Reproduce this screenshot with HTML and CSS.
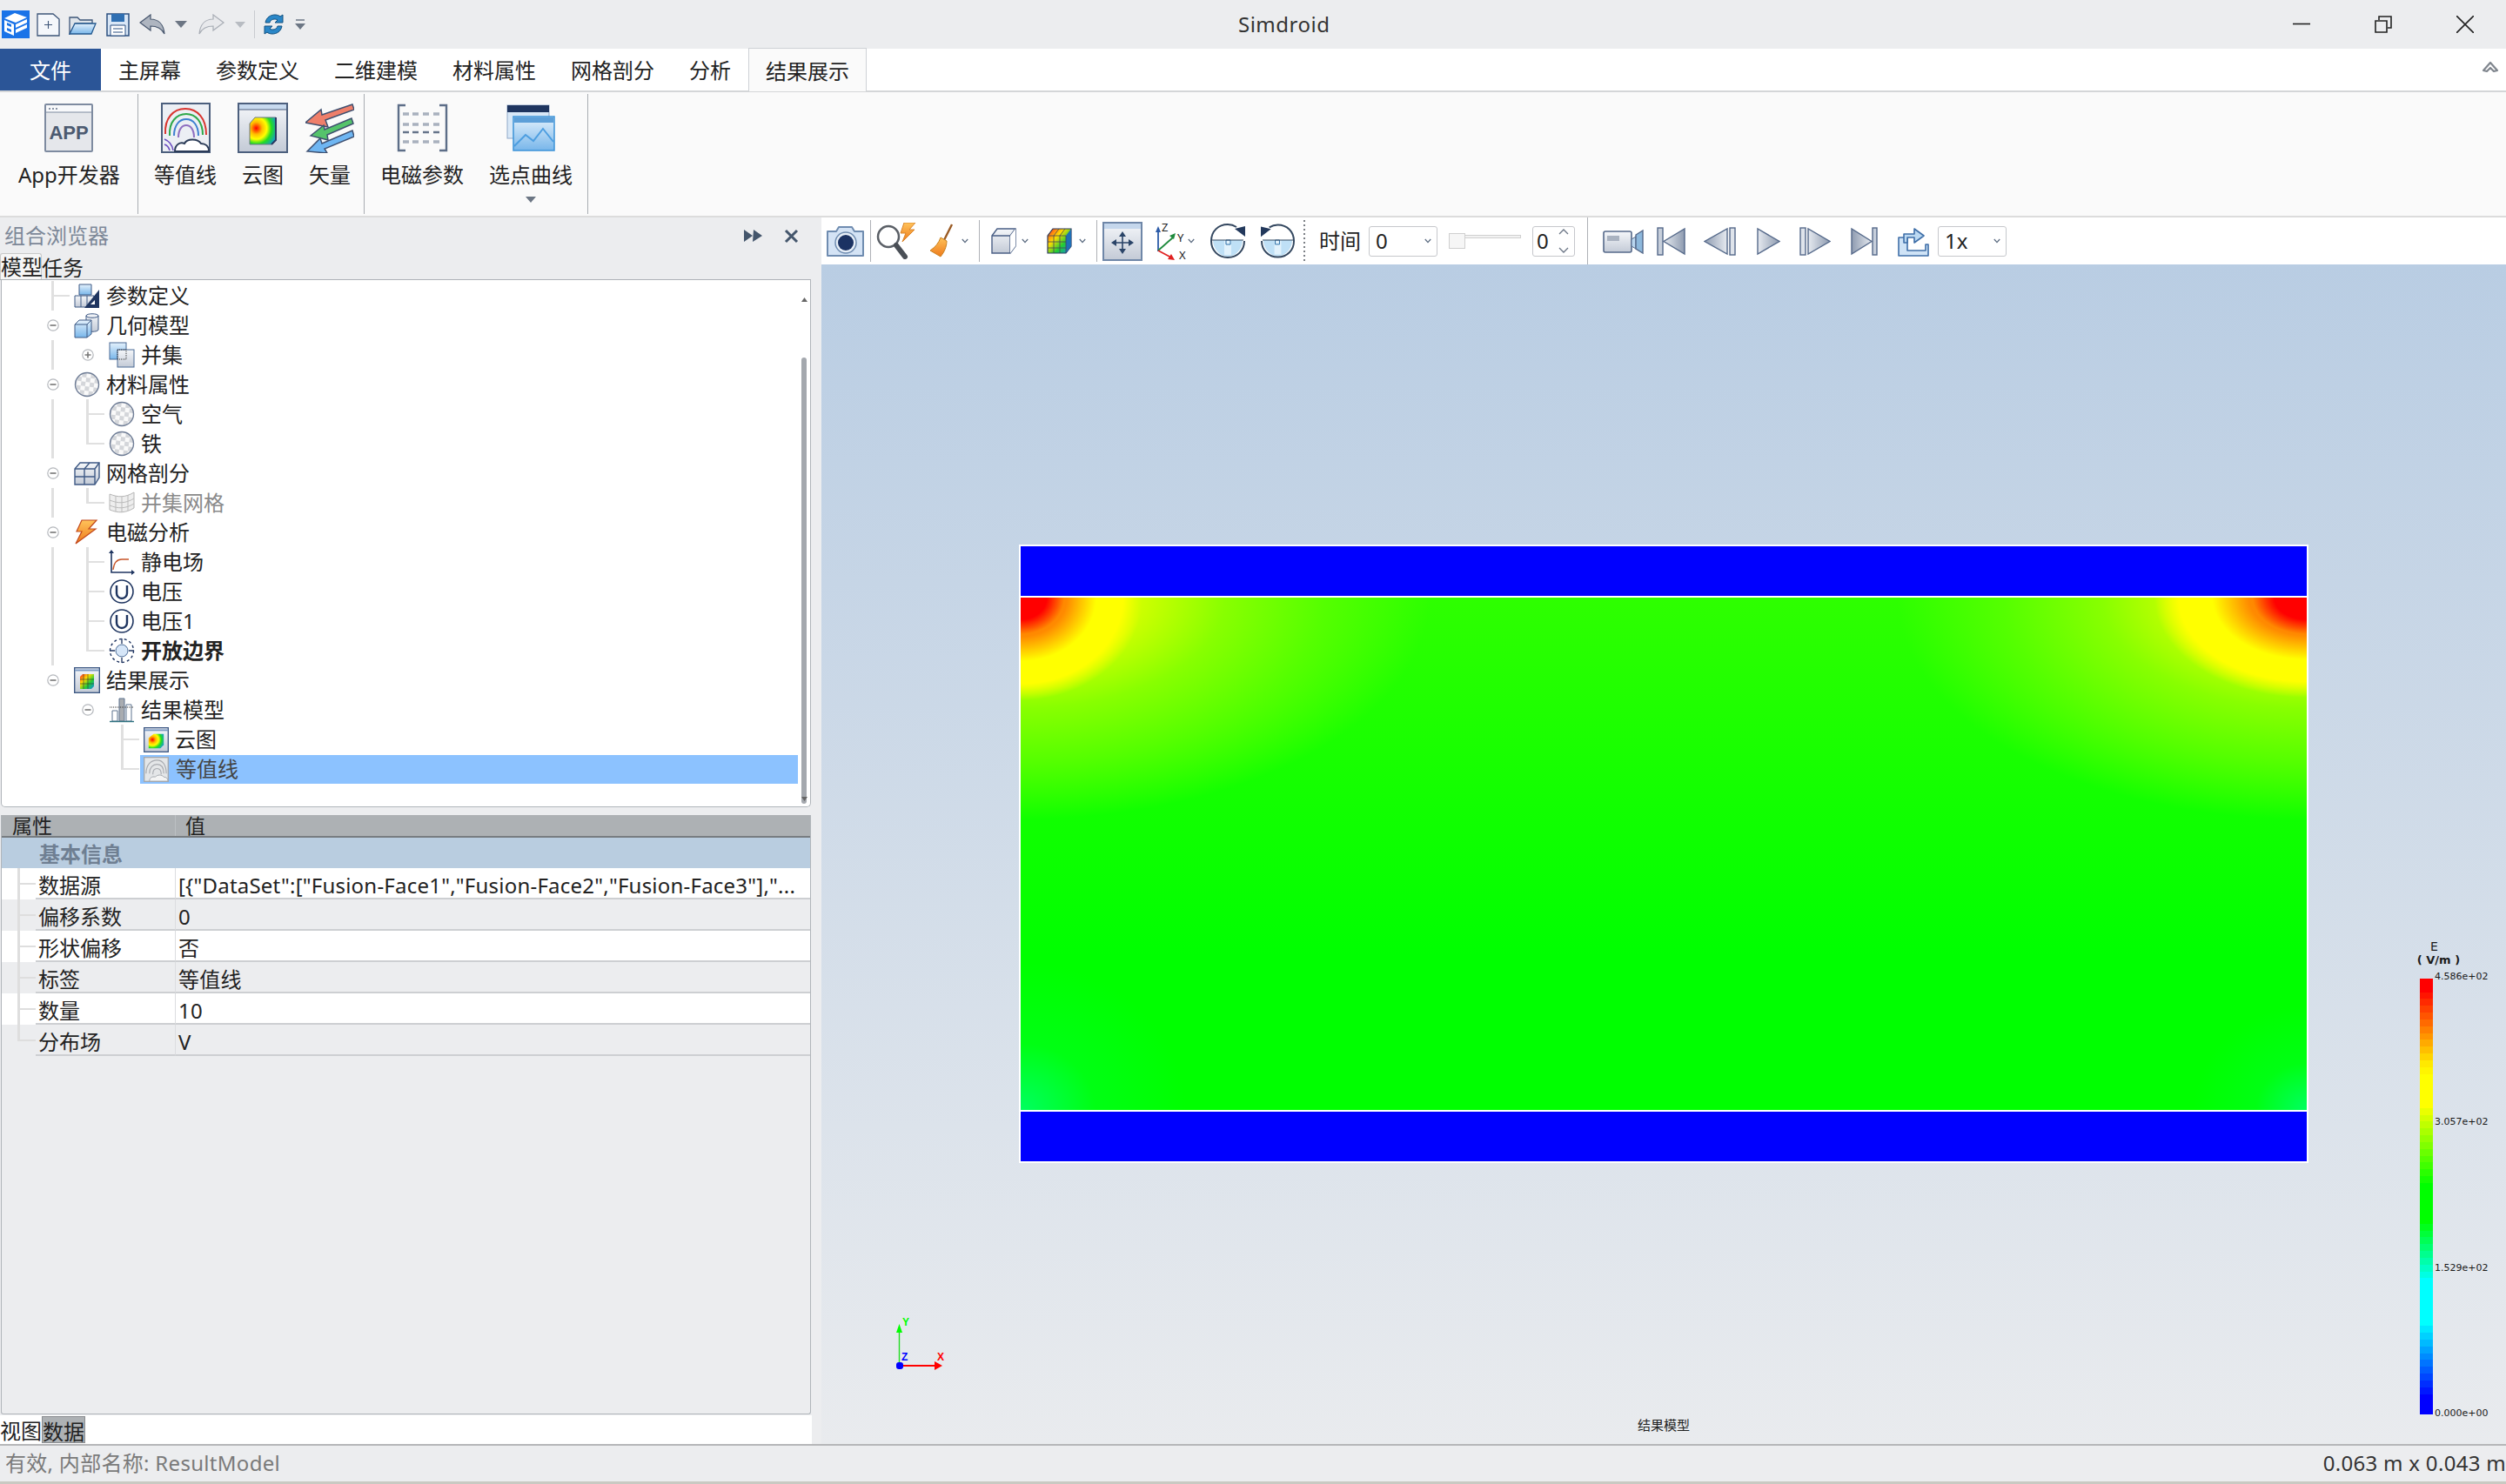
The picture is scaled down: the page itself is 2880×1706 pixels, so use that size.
FILE: index.html
```html
<!DOCTYPE html>
<html lang="zh-CN">
<head>
<meta charset="utf-8">
<title>Simdroid</title>
<link rel="stylesheet" href="styles.css">
</head>
<body>
<svg class="defs" aria-hidden="true">
  <defs>
    <linearGradient id="gSteel" x1="0" y1="0" x2="0" y2="1"><stop offset="0" stop-color="#f5f7fa"/><stop offset="1" stop-color="#c3cad6"/></linearGradient>
    <linearGradient id="gBlue" x1="0" y1="0" x2="0" y2="1"><stop offset="0" stop-color="#e4f1fc"/><stop offset="1" stop-color="#78b6ea"/></linearGradient>
    <linearGradient id="gMetalL" x1="0" y1="0" x2="1" y2="0"><stop offset="0" stop-color="#8e9bb0"/><stop offset="1" stop-color="#e6eaf0"/></linearGradient>
    <linearGradient id="gMetalR" x1="0" y1="0" x2="1" y2="0"><stop offset="0" stop-color="#e6eaf0"/><stop offset="1" stop-color="#8e9bb0"/></linearGradient>
    <linearGradient id="gOrange" x1="0" y1="0" x2="0" y2="1"><stop offset="0" stop-color="#ffc35a"/><stop offset="1" stop-color="#ee7a1c"/></linearGradient>
    <radialGradient id="gHeat" cx="0.25" cy="0.4" r="0.9"><stop offset="0" stop-color="#f00"/><stop offset="0.25" stop-color="#fb0"/><stop offset="0.45" stop-color="#ff0"/><stop offset="0.65" stop-color="#2d2"/><stop offset="1" stop-color="#18f"/></radialGradient>
    <linearGradient id="gRain" x1="0" y1="0" x2="1" y2="1"><stop offset="0" stop-color="#f22"/><stop offset="0.35" stop-color="#fd0"/><stop offset="0.65" stop-color="#2c3"/><stop offset="1" stop-color="#18e"/></linearGradient>
    <pattern id="chk" width="10" height="10" patternUnits="userSpaceOnUse" patternTransform="rotate(8)"><rect width="10" height="10" fill="#fafafa"/><rect width="5" height="5" fill="#d4d6da"/><rect x="5" y="5" width="5" height="5" fill="#d4d6da"/></pattern>
    <symbol id="minus" viewBox="0 0 14 14"><circle cx="7" cy="7" r="6.2" fill="#fff" stroke="#b5b8bd" stroke-width="1.2"/><path d="M3.5 7h7" stroke="#777" stroke-width="1.6"/></symbol>
    <symbol id="plus" viewBox="0 0 14 14"><circle cx="7" cy="7" r="6.2" fill="#fff" stroke="#b5b8bd" stroke-width="1.2"/><path d="M3.5 7h7M7 3.5v7" stroke="#777" stroke-width="1.6"/></symbol>
    <symbol id="ball" viewBox="0 0 30 30"><circle cx="15" cy="15" r="13.5" fill="url(#chk)" stroke="#6f7d96" stroke-width="1.4"/></symbol>
    <symbol id="uicon" viewBox="0 0 30 30"><circle cx="15" cy="15" r="13" fill="#fff" stroke="#1f3560" stroke-width="1.6"/><path d="M9 8v9a6 6 0 0 0 12 0V8" fill="none" stroke="#1f3560" stroke-width="2.4"/></symbol>
    <symbol id="chev" viewBox="0 0 8 6"><path d="M.8 1l3.2 3.6L7.2 1" fill="none" stroke="#5b6b80" stroke-width="1.3"/></symbol>
    <symbol id="updown" viewBox="0 0 12 30"><path d="M1 7l5-5 5 5M1 23l5 5 5-5" fill="none" stroke="#6a7585" stroke-width="1.3"/></symbol>
    <symbol id="rot" viewBox="0 0 40 40"><path d="M3 19h34c0 10-8 19-17 19S3 29 3 19z" fill="#bfe0f6"/><path d="M16 19h8v17h-8z" fill="#e2f2fc"/><path d="M18 19h5v5h-5z" fill="none" stroke="#2a6fa8"/><path d="M2 19h36" stroke="#33475f" stroke-width="1.2"/><path d="M39 20c0 11-8 19-19 19S1 31 1 20 9 1 20 1c3 0 7 1 10 3" fill="none" stroke="#33475f" stroke-width="2"/><path d="M40 3v12L28 6z" fill="#23395c"/></symbol>
  </defs>
</svg>

<div class="app">
  <header class="titlebar">
    <div class="quick">
      <svg width="32" height="32" viewBox="0 0 32 32"><rect width="32" height="32" fill="#1a73e8"/><path d="M3 9l12-6 14 5-13 6z" fill="#fff"/><path d="M3 11l11 5v13L3 24z" fill="#fff"/><path d="M6 14l5 2v3l-5-2zM6 20l5 2v3l-5-2z" fill="#1a73e8"/><path d="M16 16l13-6v4l-13 6zM16 22l13-6v4l-13 6z" fill="#fff"/></svg>
      <svg width="27" height="27" viewBox="0 0 27 27"><path d="M1 1h18l7 6v19H1z" fill="#f4f7fb" stroke="#3d5578" stroke-width="1.3"/><path d="M13.500 9v9M9 13.500h9" stroke="#3d5578" stroke-width="1.1"/></svg>
      <svg width="32" height="23" viewBox="0 0 32 23"><path d="M1 22V3h9l3 3h14v4H8L1 22z" fill="#dfe4ea" stroke="#3d5578" stroke-width="1.3"/><path d="M1 22l6-12h24l-5 12z" fill="url(#gBlue)" stroke="#23588f" stroke-width="1.3"/></svg>
      <svg width="27" height="27" viewBox="0 0 27 27"><path d="M1 1h25v25H1z" fill="#d8e6f6" stroke="#2b4f80" stroke-width="1.5"/><path d="M6 1h15v9H6z" fill="#2f6fb2"/><path d="M5 14h17v12H5z" fill="#fff" stroke="#2b4f80"/><path d="M8 18h11M8 22h11" stroke="#2b4f80" stroke-width="1.2"/></svg>
      <svg width="30" height="24" viewBox="0 0 30 24"><path d="M1 10L13 1v5c9 0 15 6 16 17-3-6-8-9-16-9v5z" fill="#aeb5c0" stroke="#47566d" stroke-width="1.2"/></svg>
      <svg width="14" height="8" viewBox="0 0 14 8"><path d="M0 0h14L7 8z" fill="#6c7684"/></svg>
      <svg width="30" height="24" viewBox="0 0 30 24"><path d="M29 10L17 1v5C8 6 2 12 1 23c3-6 8-9 16-9v5z" fill="#e8e9ec" stroke="#a8adb5" stroke-width="1.2"/></svg>
      <svg width="12" height="7" viewBox="0 0 14 8"><path d="M0 0h14L7 8z" fill="#b8bcc2"/></svg>
      <i class="qsep"></i>
      <svg width="25" height="26" viewBox="0 0 25 26"><path d="M3 11C4 5 9 2 14 2c3 0 5 1 6 2l3-2v9h-9l3-3c-3-2-8-1-9 3z" fill="#2a87c8" stroke="#12507f"/><path d="M22 15c-1 6-6 9-11 9-3 0-5-1-6-2l-3 2v-9h9l-3 3c3 2 8 1 9-3z" fill="#2a87c8" stroke="#12507f"/></svg>
      <svg width="12" height="12" viewBox="0 0 12 12"><path d="M1 1h10" stroke="#6c7684" stroke-width="1.5"/><path d="M0 5h12L6 12z" fill="#6c7684"/></svg>
    </div>
    <div class="apptitle">Simdroid</div>
    <div class="winbtns">
      <div class="winbtn"><svg width="20" height="20" viewBox="0 0 20 20"><path d="M0 9.500h20" stroke="#222" stroke-width="1.6"/></svg></div>
      <div class="winbtn"><svg width="20" height="20" viewBox="0 0 20 20"><path d="M1 6h13v13H1z" fill="none" stroke="#222" stroke-width="1.6"/><path d="M5 5V1h14v13h-4" fill="none" stroke="#222" stroke-width="1.6"/></svg></div>
      <div class="winbtn"><svg width="20" height="20" viewBox="0 0 20 20"><path d="M0 0l20 20M20 0L0 20" stroke="#222" stroke-width="1.6"/></svg></div>
    </div>
  </header>

  <nav class="menubar">
    <div class="filetab">文件</div>
    <div class="menuitem">主屏幕</div>
    <div class="menuitem">参数定义</div>
    <div class="menuitem">二维建模</div>
    <div class="menuitem">材料属性</div>
    <div class="menuitem">网格剖分</div>
    <div class="menuitem">分析</div>
    <div class="menuitem active">结果展示</div>
    <svg class="collapse" width="20" height="15" viewBox="0 0 20 15"><path d="M2 12L10 3l8 9-4 1-4-4-4 4z" fill="none" stroke="#80868e" stroke-width="2.2" stroke-linejoin="round"/></svg>
  </nav>

  <section class="ribbon">
    <div class="rgroup g1">
      <div class="rbtn">
        <svg class="ricon" width="56" height="58" viewBox="0 0 56 58"><rect x="1" y="2" width="54" height="54" rx="1" fill="#e5e7eb" stroke="#7e8ba0" stroke-width="2"/><rect x="2" y="3" width="52" height="8" fill="#f8f9fb"/><path d="M2 11h52" stroke="#7e8ba0"/><path d="M5 7h2M9 7h2M13 7h2" stroke="#8a94a5" stroke-width="2"/><text x="28" y="42" class="svgbold">APP</text></svg>
        <span>App开发器</span>
      </div>
    </div>
    <div class="rgroup g2">
      <div class="rbtn">
        <svg class="ricon" width="57" height="58" viewBox="0 0 57 58"><rect x="1" y="1" width="55" height="56" fill="#eceff4" stroke="#4c5f7d" stroke-width="2"/><path d="M5 36C4 18 14 7 28 7s24 11 24 30" fill="none" stroke="#d9352f" stroke-width="2"/><path d="M10 38C9 22 18 13 29 13s19 9 19 24" fill="none" stroke="#2ea84a" stroke-width="2"/><path d="M15 38c0-12 6-19 14-19s14 7 14 19" fill="none" stroke="#3d7fd0" stroke-width="2"/><path d="M20 40c0-9 4-14 9-14s9 5 9 14" fill="none" stroke="#8f6fc0" stroke-width="2"/><path d="M4 42c5 2 9 6 10 13M4 48c3 1 5 3 6 7" fill="none" stroke="#6b4fc0" stroke-width="1.6"/><path d="M16 56c0-8 6-11 11-9 3-6 15-6 19 0 5 0 9 3 9 9z" fill="#fff" stroke="#2c3c58" stroke-width="2"/></svg>
        <span>等值线</span>
      </div>
      <div class="rbtn">
        <svg class="ricon" width="58" height="58" viewBox="0 0 58 58"><rect x="1" y="1" width="56" height="56" fill="url(#gSteel)" stroke="#4c5f7d" stroke-width="2"/><rect x="2" y="2" width="54" height="6" fill="#c7d9ee"/><path d="M2 8h54" stroke="#4c5f7d"/><path d="M20 17h24v26l-5 5H14V24z" fill="url(#gHeat)" stroke="#6d7684"/><path d="M44 17v26l-5 5" fill="none" stroke="#2a3a60" stroke-width="2"/></svg>
        <span>云图</span>
      </div>
      <div class="rbtn">
        <svg class="ricon" width="56" height="58" viewBox="0 0 56 58"><path d="M0 23L18 8l1 6L54 2l2 6-33 12 3 8z" fill="#ef7f6a" stroke="#3f5070" stroke-width="1.500"/><path d="M6 38l15-12 1 5 31-13 2 6-30 13 1 6z" fill="#55c36b" stroke="#3f5070" stroke-width="1.500"/><path d="M2 56l15-15 2 6 35-15 2 7-34 14 3 5z" fill="#6fb6f2" stroke="#3f5070" stroke-width="1.500"/></svg>
        <span>矢量</span>
      </div>
    </div>
    <div class="rgroup g3">
      <div class="rbtn">
        <svg class="ricon" width="59" height="56" viewBox="0 0 59 56"><path d="M10 2H2v52h8M49 2h8v52h-8" fill="none" stroke="#5d6e88" stroke-width="2.4"/><path d="M7 12h7M18 12h7M30 12h7M42 12h7M7 24h7M18 24h7M30 24h7M42 24h7" stroke="#a9b1be" stroke-width="3.4"/><path d="M7 33h7M18 33h7M30 33h7M42 33h7" stroke="#66748a" stroke-width="2.4"/><path d="M7 44h7M18 44h7M30 44h7M42 44h7" stroke="#a9b1be" stroke-width="3.4"/></svg>
        <span>电磁参数</span>
      </div>
      <div class="rbtn">
        <svg class="ricon" width="56" height="54" viewBox="0 0 56 54"><rect x="1" y="1" width="48" height="38" fill="#d9e8f7" stroke="#8fa8c8"/><rect x="1" y="1" width="48" height="8" fill="#1f355f"/><rect x="8" y="14" width="47" height="39" fill="url(#gBlue)" stroke="#3d93d8" stroke-width="1.500"/><rect x="9" y="15" width="45" height="6" fill="#5d9fd8"/><path d="M9 48l13-13 9 7 11-14 12 15" fill="none" stroke="#4d9ee0" stroke-width="2"/></svg>
        <span>选点曲线</span>
        <svg class="rdrop" width="12" height="7" viewBox="0 0 12 7"><path d="M0 0h12L6 7z" fill="#6c7684"/></svg>
      </div>
    </div>
  </section>

  <main class="workspace">
    <aside class="leftcol">
      <div class="panelhead">
        <span class="panelname">组合浏览器</span>
        <svg class="panelicons" width="68" height="18" viewBox="0 0 68 18"><path d="M0 2l10 7-10 7zM11 2l10 7-11 7z" fill="#44566c"/><path d="M48 3l13 13M61 3L48 16" stroke="#44566c" stroke-width="3"/></svg>
      </div>
      <div class="tabs"><span class="tab on">模型</span><span class="tab">任务</span></div>

      <div class="tree">
        <div class="rows">
          <div class="row"><i class="cell t"></i><svg class="tic" width="30" height="30" viewBox="0 0 30 30"><path d="M6 2h14v12H6z" fill="url(#gBlue)" stroke="#3f5a85"/><path d="M1 15h22v13H1z" fill="url(#gSteel)" stroke="#3f5a85"/><path d="M8 15v13M15 15v13" stroke="#3f5a85"/><path d="M29 8v21H12z" fill="#1f3560"/><path d="M24 20v5h-5z" fill="#fff"/></svg><span class="lab">参数定义</span></div>
          <div class="row"><i class="cell"><svg width="14" height="14"><use href="#minus"/></svg></i><svg class="tic" width="30" height="30" viewBox="0 0 30 30"><path d="M14 4c0-3 14-3 14 0v16c0 3-14 3-14 0z" fill="url(#gSteel)" stroke="#3f5a85"/><path d="M14 4c0 3 14 3 14 0" fill="none" stroke="#3f5a85"/><path d="M1 14l5-5h14v16l-5 4H1z" fill="url(#gBlue)" stroke="#3f5a85"/><path d="M1 14h14v15M15 14l5-5" fill="none" stroke="#3f5a85"/></svg><span class="lab">几何模型</span></div>
          <div class="row"><i class="cell v"></i><i class="cell"><svg width="14" height="14"><use href="#plus"/></svg></i><svg class="tic" width="30" height="30" viewBox="0 0 30 30"><rect x="1" y="1" width="19" height="19" fill="url(#gBlue)" stroke="#4a6a95"/><rect x="10" y="9" width="19" height="20" fill="url(#gSteel)" stroke="#4a6a95"/><rect x="10" y="9" width="10" height="11" fill="none" stroke="#333" stroke-dasharray="1 1"/></svg><span class="lab">并集</span></div>
          <div class="row"><i class="cell"><svg width="14" height="14"><use href="#minus"/></svg></i><svg class="tic" width="30" height="30"><use href="#ball"/></svg><span class="lab">材料属性</span></div>
          <div class="row"><i class="cell v"></i><i class="cell t"></i><svg class="tic" width="30" height="30"><use href="#ball"/></svg><span class="lab">空气</span></div>
          <div class="row"><i class="cell v"></i><i class="cell l"></i><svg class="tic" width="30" height="30"><use href="#ball"/></svg><span class="lab">铁</span></div>
          <div class="row"><i class="cell"><svg width="14" height="14"><use href="#minus"/></svg></i><svg class="tic" width="30" height="30" viewBox="0 0 30 30"><path d="M1 10l6-7h22v17l-5 8H1z" fill="url(#gSteel)" stroke="#3f5a85" stroke-width="1.4"/><path d="M1 10h23v18M24 10l5-7M12 10v18M1 19h23M12 10l6-7" fill="none" stroke="#3f5a85" stroke-width="1.4"/></svg><span class="lab">网格剖分</span></div>
          <div class="row"><i class="cell v"></i><i class="cell l"></i><svg class="tic" width="30" height="30" viewBox="0 0 30 30"><path d="M1 5c10 4 18 4 28-2v18c-10 6-18 6-28 2z" fill="#eee" stroke="#b5b5b5"/><path d="M8 7v18M15 8v18M22 6v18M1 12c10 4 18 4 28-2M1 18c10 4 18 4 28-2" fill="none" stroke="#bbb"/></svg><span class="lab dim">并集网格</span></div>
          <div class="row"><i class="cell"><svg width="14" height="14"><use href="#minus"/></svg></i><svg class="tic" width="30" height="30" viewBox="0 0 30 30"><path d="M9 1h17l-9 10h8L2 28l7-14H3z" fill="url(#gOrange)" stroke="#c2491c" stroke-width="1.2"/></svg><span class="lab">电磁分析</span></div>
          <div class="row"><i class="cell v"></i><i class="cell t"></i><svg class="tic" width="30" height="30" viewBox="0 0 30 30"><path d="M3 2v25h25" fill="none" stroke="#1f3560" stroke-width="1.6"/><path d="M0 5l3-4 3 4zM26 24l4 3-4 3z" fill="#1f3560"/><path d="M5 24c1-9 5-12 10-12h8" fill="none" stroke="#c8562a" stroke-width="1.4"/></svg><span class="lab">静电场</span></div>
          <div class="row"><i class="cell v"></i><i class="cell t"></i><svg class="tic" width="30" height="30"><use href="#uicon"/></svg><span class="lab">电压</span></div>
          <div class="row"><i class="cell v"></i><i class="cell t"></i><svg class="tic" width="30" height="30"><use href="#uicon"/></svg><span class="lab">电压1</span></div>
          <div class="row"><i class="cell v"></i><i class="cell l"></i><svg class="tic" width="30" height="30" viewBox="0 0 30 30"><circle cx="15" cy="15" r="13.500" fill="none" stroke="#1f3560" stroke-width="1.4" stroke-dasharray="3 3"/><circle cx="15" cy="15" r="7" fill="#d6e6f8" stroke="#4a6a95"/><path d="M15 1v6M15 23v6M1 15h6M23 15h6" stroke="#1f3560" stroke-width="1.3"/></svg><span class="lab bold">开放边界</span></div>
          <div class="row"><i class="cell"><svg width="14" height="14"><use href="#minus"/></svg></i><svg class="tic" width="30" height="30" viewBox="0 0 30 30"><rect x=".7" y=".7" width="28.6" height="28.6" fill="url(#gSteel)" stroke="#3f5a85" stroke-width="1.4"/><path d="M1 3.500h28" stroke="#7c9ac2" stroke-width="2"/><path d="M7 11l3-3h13v14l-3 3H7z" fill="url(#gRain)"/><path d="M11 8v17M16 8v17M7 14h16M7 19h16" stroke="#333" stroke-width=".6"/></svg><span class="lab">结果展示</span></div>
          <div class="row"><i class="cell"></i><i class="cell"><svg width="14" height="14"><use href="#minus"/></svg></i><svg class="tic" width="30" height="30" viewBox="0 0 30 30"><path d="M4 16h6v12H4z" fill="#fff" stroke="#5f7590"/><path d="M12 2h6v26h-6z" fill="#a9acb0" stroke="#5f7590"/><path d="M20 9h6v19h-6z" fill="#fff" stroke="#5f7590"/><path d="M1 12h28" stroke="#333" stroke-dasharray="1 1"/><path d="M1 28.500h28" stroke="#2e7280" stroke-width="1.4"/></svg><span class="lab">结果模型</span></div>
          <div class="row"><i class="cell"></i><i class="cell"></i><i class="cell t"></i><svg class="tic" width="29" height="29" viewBox="0 0 30 30"><rect x=".7" y=".7" width="28.6" height="28.6" fill="url(#gSteel)" stroke="#3f5a85" stroke-width="1.4"/><path d="M1 3.500h28" stroke="#7c9ac2" stroke-width="2"/><path d="M8 11l4-3h12v13l-4 4H6V13z" fill="url(#gHeat)"/></svg><span class="lab">云图</span></div>
          <div class="row"><i class="cell"></i><i class="cell"></i><i class="cell l"></i><div class="sel"><svg class="tic" width="29" height="29" viewBox="0 0 30 30"><rect x=".7" y=".7" width="28.6" height="28.6" fill="#e4e6e8" stroke="#a3a8ae" stroke-width="1.4"/><path d="M3 20C3 9 9 4 16 4s11 6 11 16M7 20c0-7 4-11 9-11s8 4 8 11M11 21c0-5 2-7 5-7s5 2 5 7" fill="none" stroke="#a8abb0" stroke-width="1.2"/><path d="M7 29c0-4 3-6 7-5 2-3 8-3 10 0 3 0 5 2 5 5z" fill="#f4f4f4" stroke="#a3a8ae"/></svg><span class="lab">等值线</span></div></div>
        </div>
        <div class="scroll"><svg width="7" height="5" viewBox="0 0 7 5"><path d="M0 5l3.500-5L7 5z" fill="#666"/></svg><i class="thumb"></i><svg width="7" height="5" viewBox="0 0 7 5"><path d="M0 0l3.500 5L7 0z" fill="#666"/></svg></div>
      </div>

      <div class="props">
        <div class="phead"><span>属性</span><span>值</span></div>
        <div class="pgroup">基本信息</div>
        <div class="prow white"><i class="pguide t"></i><span class="pname">数据源</span><span class="pval">[{"DataSet":["Fusion-Face1","Fusion-Face2","Fusion-Face3"],"...</span></div>
        <div class="prow"><i class="pguide t"></i><span class="pname">偏移系数</span><span class="pval">0</span></div>
        <div class="prow white"><i class="pguide t"></i><span class="pname">形状偏移</span><span class="pval">否</span></div>
        <div class="prow"><i class="pguide t"></i><span class="pname">标签</span><span class="pval">等值线</span></div>
        <div class="prow white"><i class="pguide t"></i><span class="pname">数量</span><span class="pval">10</span></div>
        <div class="prow"><i class="pguide l"></i><span class="pname">分布场</span><span class="pval">V</span></div>
      </div>
      <div class="bottomtabs"><span class="btab">视图</span><span class="btab on">数据</span></div>
    </aside>

    <section class="viewcol">
      <div class="toolbar">
        <svg width="45" height="37" viewBox="0 0 45 37"><path d="M2 7h10l3-5h15l3 5h10v28H2z" fill="#d4e3f5" stroke="#6f8cb0" stroke-width="2" stroke-linejoin="round"/><circle cx="23" cy="20" r="12" fill="#e8f0f9" stroke="#6f8cb0" stroke-width="1.500"/><circle cx="23" cy="20" r="9" fill="#1b3263"/></svg>
        <i class="tsep"></i>
        <svg width="47" height="42" viewBox="0 0 47 42"><path d="M32 0h13l-7 8h6L30 22l4-10h-6z" fill="url(#gOrange)" stroke="#d9842a"/><circle cx="14" cy="16" r="12" fill="#fff" stroke="#5a5f66" stroke-width="2.500"/><path d="M23 26l10 13" stroke="#4a4f56" stroke-width="6" stroke-linecap="round"/></svg>
        <svg width="27" height="40" viewBox="0 0 27 40"><path d="M25 1l-9 18" stroke="#9a5b24" stroke-width="2.4"/><path d="M12 16l7 4c0 7-3 13-7 18L0 31c6-4 10-9 12-15z" fill="url(#gOrange)" stroke="#c8801e"/></svg>
        <svg class="chev" width="8" height="6"><use href="#chev"/></svg>
        <i class="tsep"></i>
        <svg width="29" height="30" viewBox="0 0 29 30"><path d="M1 9l6-8h21v20l-6 8H1z" fill="url(#gSteel)" stroke="#4a5f85" stroke-width="1.4"/><path d="M1 9h21v20M22 9l6-8" fill="none" stroke="#4a5f85" stroke-width="1.4"/><path d="M22 9l6-8v20l-6 8z" fill="#fff"/></svg>
        <svg class="chev" width="8" height="6"><use href="#chev"/></svg>
        <svg width="29" height="30" viewBox="0 0 29 30"><path d="M1 9l6-8h21v20l-6 8H1z" fill="url(#gRain)" stroke="#2a3a60" stroke-width="1.2"/><path d="M22 9l6-8v20l-6 8z" fill="#1f6fb5"/><path d="M1 9h21v20M8 9v20M15 9v20M1 16h21M1 23h21M7 1l-6 8M14 1L8 9M21 1l-6 8" fill="none" stroke="#445" stroke-width=".8"/></svg>
        <svg class="chev" width="8" height="6"><use href="#chev"/></svg>
        <i class="tsep"></i>
        <svg width="46" height="45" viewBox="0 0 46 45"><rect x="1" y="1" width="44" height="43" fill="url(#gSteel)" stroke="#6f87a8" stroke-width="2"/><rect x="2" y="2" width="42" height="6" fill="#c5d7ec"/><path d="M23 13v22M12 24h22" stroke="#2a4468" stroke-width="1.6"/><path d="M23 11l-4 6h8zM23 37l-4-6h8zM10 24l6-4v8zM36 24l-6-4v8z" fill="#2a4468"/></svg>
        <svg class="ovf" width="36" height="44" viewBox="0 0 36 44"><path d="M3 34V10" stroke="#2c5ba8" stroke-width="1.8"/><path d="M0 12l3-7 3 7z" fill="#2c5ba8"/><path d="M3 33l17-15" stroke="#1e8a3c" stroke-width="1.8"/><path d="M16 16l7-3-2 7z" fill="#1e8a3c"/><path d="M3 33l15 8" stroke="#e02020" stroke-width="1.8"/><path d="M14 43l8 1-4-7z" fill="#e02020"/><text x="7" y="11" class="axlab">Z</text><text x="25" y="23" class="axlab">Y</text><text x="27" y="43" class="axlab">X</text></svg>
        <svg class="chev" width="8" height="6"><use href="#chev"/></svg>
        <svg width="40" height="40"><use href="#rot"/></svg>
        <svg class="flip" width="39" height="40"><use href="#rot"/></svg>
        <i class="tdots"></i>
        <span class="tlabel">时间</span>
        <div class="combo"><span>0</span><svg width="8" height="6"><use href="#chev"/></svg></div>
        <div class="slider"><i class="knob"></i><i class="track"></i></div>
        <div class="combo spin"><span>0</span><svg width="12" height="30"><use href="#updown"/></svg></div>
        <i class="tsep tall"></i>
        <svg width="47" height="30" viewBox="0 0 47 30"><rect x="1" y="4" width="32" height="24" rx="2" fill="url(#gSteel)" stroke="#55698a" stroke-width="1.6"/><rect x="5" y="9" width="14" height="6" fill="#a9b2c0"/><path d="M33 13l5-3v14l-5-3z" fill="#b9d6ef" stroke="#55698a"/><path d="M38 8l8-5v26l-8-5z" fill="#8db8dc" stroke="#55698a" stroke-width="1.4"/></svg>
        <svg width="33" height="33" viewBox="0 0 33 33"><rect x="1" y="1" width="6" height="31" fill="#c7cfdb" stroke="#55698a" stroke-width="1.4"/><path d="M32 2v29L8 16.500z" fill="url(#gMetalR)" stroke="#55698a" stroke-width="1.4"/></svg>
        <svg width="37" height="33" viewBox="0 0 37 33"><rect x="30" y="1" width="6" height="31" fill="#dfe4eb" stroke="#55698a" stroke-width="1.4"/><path d="M27 2v29L1 16.500z" fill="url(#gMetalL)" stroke="#55698a" stroke-width="1.4"/></svg>
        <svg width="27" height="33" viewBox="0 0 27 33"><path d="M1 2v29l25-14.500z" fill="url(#gMetalR)" stroke="#55698a" stroke-width="1.4"/></svg>
        <svg width="36" height="33" viewBox="0 0 36 33"><rect x="1" y="1" width="6" height="31" fill="#dfe4eb" stroke="#55698a" stroke-width="1.4"/><path d="M10 2v29l25-14.500z" fill="url(#gMetalR)" stroke="#55698a" stroke-width="1.4"/></svg>
        <svg width="31" height="33" viewBox="0 0 31 33"><rect x="25" y="1" width="5" height="31" fill="#c7cfdb" stroke="#55698a" stroke-width="1.4"/><path d="M1 2v29l23-14.500z" fill="url(#gMetalL)" stroke="#55698a" stroke-width="1.4"/></svg>
        <svg width="37" height="36" viewBox="0 0 37 36"><path d="M2 14h10v15h21V22h3v13H2z" fill="#cfe3f6" stroke="#3f6fa8" stroke-width="1.6" stroke-linejoin="round"/><path d="M8 20V10h12V4l11 8-11 8v-6h-8v6z" fill="#bcd9f2" stroke="#3f6fa8" stroke-width="1.6" stroke-linejoin="round"/></svg>
        <div class="combo"><span>1x</span><svg width="8" height="6"><use href="#chev"/></svg></div>
      </div>

      <div class="viewport">
        <div class="model">
          <div class="plate"></div>
          <div class="field"></div>
          <div class="plate"></div>
        </div>
        <svg class="triad ovf" width="66" height="72" viewBox="0 0 66 72"><path d="M6.500 62V18" stroke="#22dd22" stroke-width="1.4"/><path d="M3 24l3.500-10L10 24z" fill="#0f0"/><path d="M6 62h44" stroke="#f00" stroke-width="2"/><path d="M47 57l9 5-9 5z" fill="#f00"/><rect x="3" y="58" width="8" height="8" rx="3" fill="#00f"/><text x="10" y="16" class="tri ty">Y</text><text x="9" y="56" class="tri tz">Z</text><text x="50" y="56" class="tri tx">X</text></svg>
        <div class="legend">
          <div class="legtitle"><span>E</span><b>( V/m )</b></div>
          <div class="legbody">
            <i class="legbar"></i>
            <div class="legticks"><span>4.586e+02</span><span>3.057e+02</span><span>1.529e+02</span><span>0.000e+00</span></div>
          </div>
        </div>
        <div class="caption">结果模型</div>
      </div>
    </section>
  </main>

  <footer class="statusbar"><span class="stl">有效, 内部名称: ResultModel</span><span class="str">0.063 m x 0.043 m</span></footer>
</div>
</body>
</html>
```

FILE: styles.css
```css
* { box-sizing: border-box; }
html, body { margin: 0; padding: 0; }
body {
  width: 2880px; height: 1706px; overflow: hidden;
  background: #ecedef; color: #222;
  font: 24px/1.2 "Noto Sans", "Noto Sans CJK SC", sans-serif;
}
i { font-style: normal; display: block; }
svg { display: block; flex: none; }
.defs { position: absolute; width: 0; height: 0; }
.ovf { overflow: visible; }
.flip { transform: scaleX(-1); }
.app { display: flex; flex-direction: column; height: 1706px; border-bottom: 3px solid #c9c9c2; }

/* title bar */
.titlebar { height: 56px; flex: none; display: grid; grid-template-columns: 1423px auto 1fr; align-items: center; background: #ecedef; }
.quick { display: grid; grid-template-columns: 34px 35px 42px 38px 41px 25px 43px 24px 11px 34px 24px; align-items: center; justify-items: end; }
.qsep { width: 1px; height: 32px; background: #c8cbd0; }
.apptitle { color: #333; letter-spacing: .5px; }
.winbtns { display: flex; justify-content: flex-end; }
.winbtn { width: 94px; height: 56px; display: flex; align-items: center; justify-content: center; }

/* menu */
.menubar { height: 48px; flex: none; display: flex; align-items: stretch; background: #fff; position: relative; }
.filetab { width: 116px; background: #2b5597; color: #fff; display: flex; align-items: center; justify-content: center; padding-top: 2px; }
.menuitem { padding: 2px 20px 0; display: flex; align-items: center; }
.menuitem.active { border: 1px solid #cfd2d6; border-bottom: none; height: 50px; margin-top: -1px; background: #fafafa; position: relative; z-index: 1; padding: 3px 19px 0 19px; }
.collapse { margin: 13px 8px 0 auto; }

/* ribbon */
.ribbon { height: 146px; flex: none; display: flex; background: #fafafa; border-top: 2px solid #d4d6d8; border-bottom: 2px solid #dcdcdc; padding: 2px 0; }
.rgroup { display: flex; height: 138px; border-right: 1px solid #a9adb2; }
.g1 { width: 159px; padding-left: 21px; }
.g2 { width: 260px; padding-left: 18px; gap: 29px; }
.g3 { width: 257px; padding-left: 18px; gap: 29px; }
.rbtn { display: flex; flex-direction: column; align-items: center; padding-top: 10px; }
.ricon { height: 58px; margin: 0 -12px; }
.rbtn span { margin-top: 8px; line-height: 34px; white-space: nowrap; }
.rdrop { margin-top: 8px; }

/* workspace */
.workspace { flex: 1; min-height: 0; display: flex; }
.leftcol { width: 944px; flex: none; display: flex; flex-direction: column; padding-right: 12px; }
.panelhead { height: 46px; flex: none; display: flex; align-items: center; justify-content: space-between; padding: 0 9px 4px 5px; }
.panelname { color: #7d8898; }
.tabs { height: 26px; flex: none; display: flex; line-height: 24px; border-bottom: 1px solid #aeb2b7; position: relative; z-index: 1; }
.tab { width: 48px; text-align: left; white-space: nowrap; }
.tab.on { background: #f6f6f6; border: 1px solid #c8c8c8; border-bottom: none; border-radius: 3px 3px 0 0; height: 30px; margin-top: -5px; padding-top: 3px; overflow: visible; }

.tree { height: 606px; flex: none; margin-left: 1px; display: flex; background: #fff; border: 1px solid #b0b5ba; border-top: none; border-radius: 0 0 5px 5px; padding-top: 1px; }
.rows { flex: 1; padding-left: 38px; min-width: 0; }
.row { display: flex; align-items: center; height: 34px; }
.cell { width: 40px; height: 34px; flex: none; display: flex; align-items: center; justify-content: center; background-repeat: no-repeat; padding-left: 1px; }
.cell.v { background-image: linear-gradient(#e0e0e0, #e0e0e0); background-position: 19px 0; background-size: 3px 100%; }
.cell.t { background-image: linear-gradient(#e0e0e0, #e0e0e0), linear-gradient(#e0e0e0, #e0e0e0); background-position: 19px 0, 19px 16px; background-size: 3px 100%, 21px 2px; }
.cell.l { background-image: linear-gradient(#e0e0e0, #e0e0e0), linear-gradient(#e0e0e0, #e0e0e0); background-position: 19px 0, 19px 16px; background-size: 3px 18px, 21px 2px; }
.tic { margin-left: 5px; }
.lab { margin-left: 7px; white-space: nowrap; color: #222; }
.lab.dim { color: #8a8a8a; }
.lab.bold { font-weight: 700; }
.sel { flex: 1; height: 33px; display: flex; align-items: center; background: #8cc2ff; margin-left: 1px; }
.sel .tic { margin-left: 4px; }
.sel .lab { margin-left: 8px; color: #444; }
.scroll { width: 14px; flex: none; display: flex; flex-direction: column; align-items: center; padding: 19px 0 0; }
.thumb { width: 6px; height: 513px; margin-top: 64px; background: #a4a8ae; border-radius: 3px; }
.scroll svg:last-child { margin-top: -8px; }

/* properties */
.props { flex: 1; min-height: 0; margin: 9px 0 0 1px; border: 1px solid #b0b5ba; border-top: none; border-radius: 0 0 3px 3px; }
.phead { height: 26px; display: grid; grid-template-columns: 199px 1fr; background: #adb1b4; border-bottom: 2px solid #777c80; font-size: 23px; line-height: 24px; }
.phead span { padding-left: 12px; }
.phead span + span { border-left: 1px solid #bcc0c3; padding-left: 11px; }
.pgroup { height: 35px; background: #b9cde0; color: #6f7f92; font-weight: 700; padding: 2px 0 0 43px; line-height: 33px; overflow: hidden; }
.prow { height: 36px; display: grid; grid-template-columns: 39px 160px 1fr; }
.prow.white { background: #fff; }
.pguide { background-repeat: no-repeat; background-image: linear-gradient(#dedede, #dedede), linear-gradient(#dedede, #dedede); }
.pguide.t { background-position: 18px 0, 18px 17px; background-size: 3px 100%, 21px 2px; }
.pguide.l { background-position: 18px 0, 18px 17px; background-size: 3px 19px, 21px 2px; }
.pname, .pval { border-bottom: 2px solid #cdcfd2; line-height: 33px; padding-top: 3px; white-space: nowrap; overflow: hidden; }
.pname { padding-left: 3px; }
.pval { border-left: 1px solid #dcdde0; padding-left: 3px; letter-spacing: .22px; }

.bottomtabs { height: 33px; flex: none; margin-top: 1px; display: flex; background: #fff; line-height: 31px; margin-right: -1px; }
.btab { width: 48px; height: 31px; white-space: nowrap; padding-top: 2px; }
.btab.on { width: 50px; background: #adb1b4; border: 1px solid #8a8d90; margin-top: 1px; padding-top: 1px; }

/* view */
.viewcol { flex: 1; min-width: 0; display: flex; flex-direction: column; }
.toolbar { height: 54px; flex: none; background: #fff; display: grid; align-items: center; justify-items: end; justify-content: start;
  grid-template-columns: 50px 7px 53px 42px 17px 13px 42px 14px 50px 16px 13px 52px 51px 9px 58px 57px 12px 64px 88px 96px 62px 15px 64px 48px 58px 51px 58px 54px 59px 89px; }
.tsep { width: 1px; height: 48px; background: #aeb1b6; }
.tsep.tall { height: 54px; }
.tdots { width: 2px; height: 48px; background: repeating-linear-gradient(#7b7f85 0 2px, transparent 2px 5px); }
.tlabel { white-space: nowrap; }
.combo { width: 79px; height: 35px; background: #fff; border: 1px solid #c6c8cc; border-radius: 3px; display: flex; align-items: center; justify-content: space-between; padding: 0 6px 0 7px; }
.spin { width: 49px; padding-left: 4px; }
.slider { width: 83px; height: 18px; display: flex; align-items: flex-start; }
.knob { width: 19px; height: 18px; background: #f6f6f6; border: 1px solid #cfcfcf; flex: none; }
.track { flex: 1; height: 4px; margin-top: 2px; background: #f2f2f2; border: 1px solid #d0d0d0; border-left: none; }
.axlab { font: 400 13px "Noto Sans", sans-serif; fill: #222; }
.svgbold { font: 700 22px "Liberation Sans", sans-serif; fill: #4c5a70; text-anchor: middle; }

.viewport { flex: 1; min-height: 0; position: relative; overflow: hidden; background: linear-gradient(#b9cde3, #e9ebee); }
.model { position: absolute; left: 227px; top: 322px; width: 1482px; height: 711px; background: #fff; border: 2px solid #fff; display: flex; flex-direction: column; gap: 2px; }
.plate { height: 57px; background: #00f; flex: none; }
.field { flex: 1; background:
  radial-gradient(62px 42px at 100% 0, #f00 0, #f00 60%, rgba(255,60,0,0) 100%),
  radial-gradient(50px 42px at 0 0, #f00 0, #f00 60%, rgba(255,60,0,0) 100%),
  radial-gradient(175px 115px at 100% 0, #ff7000 0, #ff8a00 38%, #ff0 62%, #ff0 84%, rgba(190,255,0,0) 100%),
  radial-gradient(140px 118px at 0 0, #ff7000 0, #ff8a00 38%, #ff0 62%, #ff0 84%, rgba(190,255,0,0) 100%),
  radial-gradient(470px 255px at 100% 0, #cf0 0, #cf0 30%, #8f0 50%, #5f0 74%, rgba(50,255,0,0) 100%),
  radial-gradient(470px 255px at 0 0, #cf0 0, #cf0 30%, #8f0 50%, #5f0 74%, rgba(50,255,0,0) 100%),
  radial-gradient(130px 120px at 100% 100%, #00ff60 0, rgba(0,255,32,.6) 45%, rgba(0,255,0,0) 100%),
  radial-gradient(190px 170px at 0 100%, #00ff60 0, rgba(0,255,32,.6) 45%, rgba(0,255,0,0) 100%),
  linear-gradient(#2eff00, #12ff00 40%, #0f0 70%); }
.triad { position: absolute; left: 83px; top: 1204px; }
.tri { font: 700 12px "Liberation Sans", sans-serif; }
.ty { fill: #0f0; } .tz { fill: #00f; } .tx { fill: #f00; }
.legend { position: absolute; left: 1832px; top: 776px; width: 90px; font-family: "DejaVu Sans", sans-serif; color: #1a1a1a; }
.legtitle { display: flex; flex-direction: column; width: 53px; align-items: center; font-size: 13px; line-height: 16px; }
.legtitle span { margin-right: 10px; font-size: 14px; }
.legtitle b { white-space: nowrap; font-size: 13px; }
.legbody { display: flex; margin-top: 3px; margin-left: 5px; align-items: flex-start; }
.legbar { width: 15px; height: 501px; margin-top: 10px; background: linear-gradient(
  #f00 0 3.13%, #ff1500 3.13% 4.69%, #ff2a00 4.69% 6.25%, #ff4000 6.25% 7.81%, #ff5500 7.81% 9.38%, #ff6a00 9.38% 10.94%, #ff8000 10.94% 12.5%, #ff9500 12.5% 14.06%, #fa0 14.06% 15.63%, #ffbf00 15.63% 17.19%, #ffd400 17.19% 18.75%, #ffe900 18.75% 20.31%, #fff500 20.31% 21.88%, #ff0 21.88% 29.69%,
  #eaff00 29.69% 31.25%, #d4ff00 31.25% 32.81%, #bfff00 32.81% 34.38%, #af0 34.38% 35.94%, #95ff00 35.94% 37.5%, #80ff00 37.5% 39.06%, #6aff00 39.06% 40.63%, #5f0 40.63% 42.19%, #40ff00 42.19% 43.75%, #2aff00 43.75% 45.31%, #15ff00 45.31% 46.88%, #0f0 46.88% 56.25%,
  #00ff1c 56.25% 57.81%, #00ff39 57.81% 59.38%, #0f5 59.38% 60.94%, #00ff71 60.94% 62.5%, #00ff8e 62.5% 64.06%, #0fa 64.06% 65.63%, #00ffc6 65.63% 67.19%, #00ffe3 67.19% 68.75%, #0ff 68.75% 79.69%,
  #00e8ff 79.69% 81.25%, #00d1ff 81.25% 82.81%, #00baff 82.81% 84.38%, #00a2ff 84.38% 85.94%, #008bff 85.94% 87.5%, #0074ff 87.5% 89.06%, #005dff 89.06% 90.63%, #0046ff 90.63% 92.19%, #002eff 92.19% 93.75%, #0017ff 93.75% 95.31%, #00f 95.31% 100%); }
.legticks { height: 518px; margin-left: 2px; display: flex; flex-direction: column; justify-content: space-between; font-size: 11px; line-height: 16px; white-space: nowrap; }
.caption { position: absolute; left: 0; right: 0; bottom: 13px; text-align: center; font-size: 15px; line-height: 18px; color: #222; }

/* status */
.statusbar { height: 43px; flex: none; display: flex; justify-content: space-between; align-items: center; background: #ecedef; border-top: 2px solid #b5b6b8; padding: 0 0 0 6px; letter-spacing: .3px; }
.stl { color: #7a7a7a; }
.str { color: #333; }
```
